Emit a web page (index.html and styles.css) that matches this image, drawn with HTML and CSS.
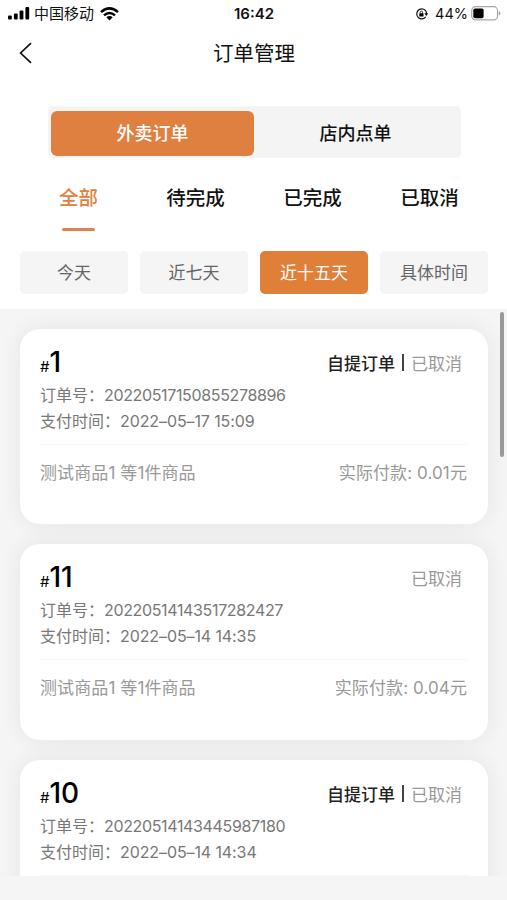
FILE: index.html
```html
<!DOCTYPE html>
<html lang="zh-CN">
<head>
    <meta charset="UTF-8">
    <meta name="viewport" content="width=device-width, initial-scale=1.0">
    <title>订单管理</title>
    <link rel="stylesheet" href="styles.css">
</head>
<body>
    <div class="status-bar">
        <div class="status-left">
            <svg class="signal" width="22" height="13" viewBox="0 0 22 13">
                <rect x="0" y="8.5" width="3.8" height="4" rx="1"/>
                <rect x="5.9" y="6.5" width="3.8" height="6" rx="1"/>
                <rect x="11.6" y="3.5" width="3.8" height="9" rx="1"/>
                <rect x="17.4" y="0" width="3.8" height="12.5" rx="1"/>
            </svg>
            <span class="carrier">中国移动</span>
            <svg class="wifi" width="19" height="14" viewBox="0 0 19 14">
                <g fill="none" stroke="#000" stroke-width="2.5">
                    <path d="M1 5.1Q9.5-2.3 18 5.1"/>
                    <path d="M4 8.4Q9.5 3.7 15 8.4"/>
                </g>
                <path d="M6.3 10.3Q9.5 7.9 12.7 10.3L9.5 13.5Z"/>
            </svg>
        </div>
        <div class="time">16:42</div>
        <div class="status-right">
            <svg width="14" height="12" viewBox="0 0 14 12">
                <path d="M10.2 2.2A5 5 0 1 0 10.7 8.9" fill="none" stroke="#111" stroke-width="1.2"/>
                <path d="M10.2 2.2A5 5 0 0 1 11.5 5.5" fill="none" stroke="#111" stroke-width="1.2"/>
                <path d="M9.4 5.3H13.2L11.3 8Z"/>
                <rect x="4.3" y="5.3" width="4.2" height="3.2" rx=".5"/>
                <path d="M5.2 5.5V4.4a1.2 1.2 0 0 1 2.4 0V5.5" fill="none" stroke="#111" stroke-width=".9"/>
            </svg>
            <span class="percent">44%</span>
            <svg width="30" height="15" viewBox="0 0 30 15">
                <rect x=".7" y=".7" width="25.8" height="13.2" rx="3.8" fill="#fff" stroke="#a8a8a8" stroke-width="1.2"/>
                <rect x="2.3" y="2.5" width="10.3" height="9.7" rx="1.8"/>
                <path d="M27.7 5v4.6q1.7-.6 1.7-2.3t-1.7-2.3z" fill="#a8a8a8"/>
            </svg>
        </div>
    </div>

    <div class="nav-bar">
        <svg class="back" width="14" height="22" viewBox="0 0 14 22">
            <path d="M12 1.2L1.6 11L12 20.8" fill="none" stroke="#111" stroke-width="1.7"/>
        </svg>
        <h1>订单管理</h1>
    </div>

    <div class="segment">
        <div class="segment-item active">外卖订单</div>
        <div class="segment-item">店内点单</div>
    </div>

    <div class="tabs">
        <div class="tab active">全部</div>
        <div class="tab">待完成</div>
        <div class="tab">已完成</div>
        <div class="tab">已取消</div>
    </div>

    <div class="filters">
        <div class="filter">今天</div>
        <div class="filter">近七天</div>
        <div class="filter active">近十五天</div>
        <div class="filter">具体时间</div>
    </div>

    <div class="order-list">
        <div class="order">
            <div class="order-head">
                <div class="order-no"><small>#</small>1</div>
                <div class="order-status"><b>自提订单</b><i></i><span>已取消</span></div>
            </div>
            <p>订单号：<span class="order-id">20220517150855278896</span></p>
            <p>支付时间：<span class="pay-time">2022–05–17 15:09</span></p>
            <div class="order-foot">
                <span class="goods">测试商品1 等1件商品</span>
                <span class="price">实际付款: 0.01元</span>
            </div>
        </div>
        <div class="order">
            <div class="order-head">
                <div class="order-no"><small>#</small>11</div>
                <div class="order-status"><span>已取消</span></div>
            </div>
            <p>订单号：<span class="order-id">20220514143517282427</span></p>
            <p>支付时间：<span class="pay-time">2022–05–14 14:35</span></p>
            <div class="order-foot">
                <span class="goods">测试商品1 等1件商品</span>
                <span class="price">实际付款: 0.04元</span>
            </div>
        </div>
        <div class="order">
            <div class="order-head">
                <div class="order-no"><small>#</small>10</div>
                <div class="order-status"><b>自提订单</b><i></i><span>已取消</span></div>
            </div>
            <p>订单号：<span class="order-id">20220514143445987180</span></p>
            <p>支付时间：<span class="pay-time">2022–05–14 14:34</span></p>
            <div class="order-foot"></div>
        </div>
        <div class="scrollbar"></div>
    </div>
</body>
</html>
```

FILE: styles.css
```css
* {
    box-sizing: border-box;
}
body {
    margin: 0;
    height: 900px;
    display: flex;
    flex-direction: column;
    overflow: hidden;
    background: #fff;
    color: #111;
    font-family: Inter, "Noto Sans CJK SC", sans-serif;
}
.status-bar {
    display: grid;
    grid-template-columns: 1fr auto 1fr;
    align-items: center;
    height: 27px;
    padding: 0 6px 0 8px;
    line-height: 20px;
}
.status-left, .status-right {
    display: flex;
    align-items: center;
}
.carrier {
    margin: 0 6px 0 4px;
    font-size: 15px;
}
.time {
    margin-right: 1px;
    font-size: 15px;
    font-weight: 600;
}
.status-right {
    justify-content: flex-end;
}
.status-right svg:first-child {
    margin-right: 1px;
}
.percent {
    margin: 0 3px 0 5px;
    font-size: 14.5px;
}
.nav-bar {
    display: flex;
    align-items: center;
    height: 52px;
    padding-left: 19px;
}
.nav-bar h1 {
    flex: 1;
    margin: 0 32px 3px 0;
    text-align: center;
    font-size: 20.5px;
    font-weight: 400;
}
.segment {
    display: flex;
    width: 413px;
    height: 52px;
    margin: 27px 0 0 48px;
    padding: 5px 4px 2px 3px;
    border-radius: 5px;
    background: #f4f4f4;
}
.segment-item {
    flex: 1;
    border-radius: 6px;
    text-align: center;
    font-size: 18px;
    font-weight: 500;
    line-height: 46px;
}
.segment-item.active {
    background: #e08040;
    color: #fff;
}
.tabs {
    display: flex;
    height: 74px;
    margin: 19px 19px 0 20px;
}
.tab {
    flex: 1;
    display: flex;
    flex-direction: column;
    align-items: center;
    font-size: 19.5px;
    font-weight: 500;
    line-height: 43px;
}
.tab.active {
    color: #e08040;
}
.tab.active::after {
    content: "";
    width: 33px;
    height: 3px;
    margin-top: 8px;
    border-radius: 2px;
    background: #dc8450;
}
.filters {
    display: flex;
    gap: 12px;
    height: 43px;
    margin: 0 19px 15px 20px;
}
.filter {
    flex: 1;
    border-radius: 5px;
    background: #f5f5f5;
    color: #666;
    text-align: center;
    font-size: 17px;
    line-height: 44px;
}
.filter.active {
    background: #e08038;
    color: #fff;
}
.order-list {
    position: relative;
    display: flex;
    flex-direction: column;
    gap: 20px;
    height: 567px;
    padding: 19.5px 19px 0 20px;
    overflow: hidden;
    background: #f5f5f5;
}
body::after {
    content: "";
    flex: 1;
    background: #f5f5f5;
}
.order {
    flex: none;
    height: 195.5px;
    padding: 12px 20px 0;
    border-radius: 20px;
    background: #fff;
    box-shadow: 0 0 24px rgba(0, 0, 0, 0.07);
}
.order-head {
    display: flex;
    justify-content: space-between;
    height: 41px;
}
.order-no {
    color: #000;
    font-size: 28px;
    font-weight: 500;
    line-height: 43px;
}
.order-no small {
    font-size: 15px;
    font-weight: 400;
}
.order-status {
    display: flex;
    align-items: center;
    height: 43px;
    padding-right: 6px;
    color: #999;
    font-size: 17px;
}
.order-status b {
    color: #222;
    font-weight: 500;
}
.order-status i {
    width: 2px;
    height: 17px;
    margin: 0 7px;
    background: #444;
}
.order p {
    height: 26px;
    margin: 0;
    color: #777;
    font-size: 16px;
    line-height: 26px;
}
.order-id {
    letter-spacing: -0.35px;
}
.pay-time {
    letter-spacing: -0.1px;
}
.order-foot {
    display: flex;
    justify-content: space-between;
    margin-top: 10px;
    border-top: 1px solid #f8f8f8;
    color: #999;
    font-size: 17px;
    line-height: 57px;
}
.goods {
    letter-spacing: 0.1px;
}
.price {
    margin-right: 1px;
    letter-spacing: 0.1px;
}
.scrollbar {
    position: absolute;
    top: 3px;
    right: 3px;
    width: 4px;
    height: 145px;
    border-radius: 2px;
    background: #999;
}
```
